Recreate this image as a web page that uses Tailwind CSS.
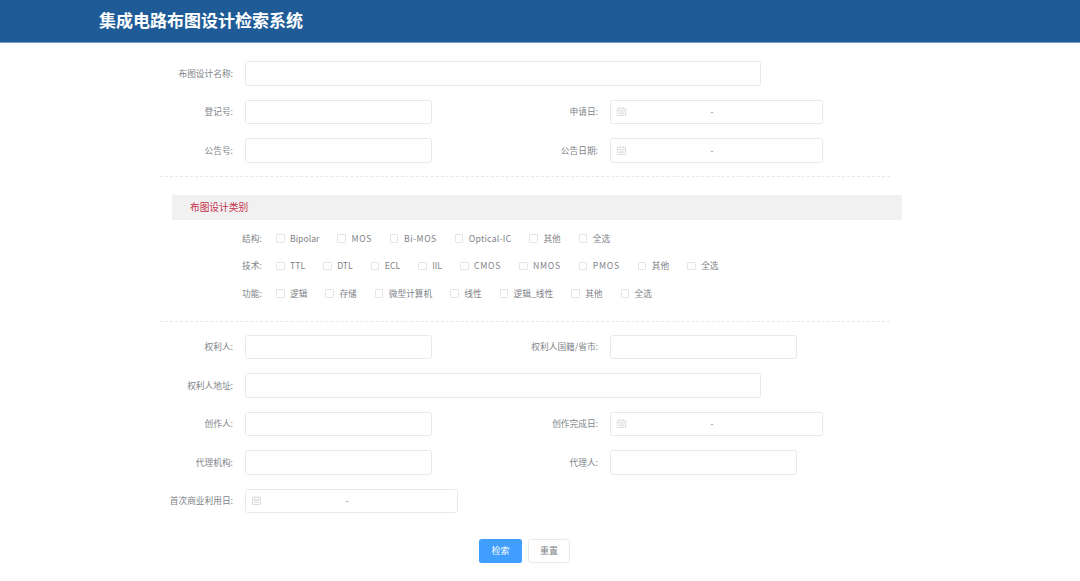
<!DOCTYPE html>
<html lang="zh">
<head>
<meta charset="utf-8">
<title>集成电路布图设计检索系统</title>
<script src="https://cdn.jsdelivr.net/npm/@tailwindcss/browser@4"></script>
</head>
<body class="bg-white overflow-hidden font-['Noto_Sans_CJK_SC','Noto_Sans',sans-serif]">
<div class="w-[1080px] h-[581px] overflow-hidden text-[8.7px] text-[#808388]">
  <header class="h-[43px] bg-[#1f5c97] border-b border-[#6f9cc2] pl-[99px] flex items-center">
    <h1 class="text-[17px] font-bold text-white leading-none pb-[3px]">集成电路布图设计检索系统</h1>
  </header>

  <main class="pl-[160px] pt-[18px]">
    <div class="w-[730px] flex flex-col gap-[14px]">
      <div class="flex items-center gap-[12px] h-[24.5px]">
        <label class="w-[73px] text-right">布图设计名称:</label>
        <div class="w-[516px] h-full border border-[#e8e9ec] rounded-[2.5px]"></div>
      </div>
      <div class="flex items-center gap-[12px] h-[24.5px]">
        <label class="w-[73px] text-right">登记号:</label>
        <div class="w-[187px] h-full border border-[#e8e9ec] rounded-[2.5px]"></div>
        <label class="w-[154px] text-right">申请日:</label>
        <div class="w-[213px] h-full border border-[#e8e9ec] rounded-[2.5px] flex items-center pl-[6px] pr-[24px]">
          <svg class="w-[9px] h-[9px]" viewBox="0 0 9 9" fill="none" stroke="#d3d5d9" stroke-width="0.8"><rect x="0.5" y="1.2" width="8" height="7.3" rx="0.5"/><path d="M0.5 3.4H8.5M2.5 0.4V2M6.5 0.4V2M2 5H7M2 6.6H7"/></svg>
          <span class="flex-1 text-center">-</span>
        </div>
      </div>
      <div class="flex items-center gap-[12px] h-[24.5px]">
        <label class="w-[73px] text-right">公告号:</label>
        <div class="w-[187px] h-full border border-[#e8e9ec] rounded-[2.5px]"></div>
        <label class="w-[154px] text-right">公告日期:</label>
        <div class="w-[213px] h-full border border-[#e8e9ec] rounded-[2.5px] flex items-center pl-[6px] pr-[24px]">
          <svg class="w-[9px] h-[9px]" viewBox="0 0 9 9" fill="none" stroke="#d3d5d9" stroke-width="0.8"><rect x="0.5" y="1.2" width="8" height="7.3" rx="0.5"/><path d="M0.5 3.4H8.5M2.5 0.4V2M6.5 0.4V2M2 5H7M2 6.6H7"/></svg>
          <span class="flex-1 text-center">-</span>
        </div>
      </div>
    </div>

    <div class="w-[730px] border-t border-dashed border-[#e9e9e9] mt-[13.5px]"></div>

    <section class="mt-[17.5px] ml-[12px] w-[730px] h-[25px] bg-[#f1f1f1] pl-[18px] pt-[1px] flex items-center text-[9.7px] text-[#c4304c]">布图设计类别</section>

    <div class="ml-[82px] mt-[11px] flex flex-col gap-[11.5px]">
      <div class="flex items-center h-[16px]">
        <span class="w-[34px] shrink-0">结构:</span>
        <div class="flex items-center gap-[18px]">
          <label class="flex items-center gap-[5.5px]"><span class="w-[8.5px] h-[8.5px] border border-[#e4e5e8] rounded-[1px]"></span>Bipolar</label>
          <label class="flex items-center gap-[5.5px]"><span class="w-[8.5px] h-[8.5px] border border-[#e4e5e8] rounded-[1px]"></span><span class="tracking-[0.6px]">MOS</span></label>
          <label class="flex items-center gap-[5.5px]"><span class="w-[8.5px] h-[8.5px] border border-[#e4e5e8] rounded-[1px]"></span><span class="tracking-[0.5px]">Bi-MOS</span></label>
          <label class="flex items-center gap-[5.5px]"><span class="w-[8.5px] h-[8.5px] border border-[#e4e5e8] rounded-[1px]"></span><span class="tracking-[0.25px]">Optical-IC</span></label>
          <label class="flex items-center gap-[5.5px]"><span class="w-[8.5px] h-[8.5px] border border-[#e4e5e8] rounded-[1px]"></span>其他</label>
          <label class="flex items-center gap-[5.5px]"><span class="w-[8.5px] h-[8.5px] border border-[#e4e5e8] rounded-[1px]"></span>全选</label>
        </div>
      </div>
      <div class="flex items-center h-[16px]">
        <span class="w-[34px] shrink-0">技术:</span>
        <div class="flex items-center gap-[18px]">
          <label class="flex items-center gap-[5.5px]"><span class="w-[8.5px] h-[8.5px] border border-[#e4e5e8] rounded-[1px]"></span>TTL</label>
          <label class="flex items-center gap-[5.5px]"><span class="w-[8.5px] h-[8.5px] border border-[#e4e5e8] rounded-[1px]"></span>DTL</label>
          <label class="flex items-center gap-[5.5px]"><span class="w-[8.5px] h-[8.5px] border border-[#e4e5e8] rounded-[1px]"></span>ECL</label>
          <label class="flex items-center gap-[5.5px]"><span class="w-[8.5px] h-[8.5px] border border-[#e4e5e8] rounded-[1px]"></span>IIL</label>
          <label class="flex items-center gap-[5.5px]"><span class="w-[8.5px] h-[8.5px] border border-[#e4e5e8] rounded-[1px]"></span><span class="tracking-[0.7px]">CMOS</span></label>
          <label class="flex items-center gap-[5.5px]"><span class="w-[8.5px] h-[8.5px] border border-[#e4e5e8] rounded-[1px]"></span><span class="tracking-[0.7px]">NMOS</span></label>
          <label class="flex items-center gap-[5.5px]"><span class="w-[8.5px] h-[8.5px] border border-[#e4e5e8] rounded-[1px]"></span><span class="tracking-[0.7px]">PMOS</span></label>
          <label class="flex items-center gap-[5.5px]"><span class="w-[8.5px] h-[8.5px] border border-[#e4e5e8] rounded-[1px]"></span>其他</label>
          <label class="flex items-center gap-[5.5px]"><span class="w-[8.5px] h-[8.5px] border border-[#e4e5e8] rounded-[1px]"></span>全选</label>
        </div>
      </div>
      <div class="flex items-center h-[16px]">
        <span class="w-[34px] shrink-0">功能:</span>
        <div class="flex items-center gap-[18px]">
          <label class="flex items-center gap-[5.5px]"><span class="w-[8.5px] h-[8.5px] border border-[#e4e5e8] rounded-[1px]"></span>逻辑</label>
          <label class="flex items-center gap-[5.5px]"><span class="w-[8.5px] h-[8.5px] border border-[#e4e5e8] rounded-[1px]"></span>存储</label>
          <label class="flex items-center gap-[5.5px]"><span class="w-[8.5px] h-[8.5px] border border-[#e4e5e8] rounded-[1px]"></span>微型计算机</label>
          <label class="flex items-center gap-[5.5px]"><span class="w-[8.5px] h-[8.5px] border border-[#e4e5e8] rounded-[1px]"></span>线性</label>
          <label class="flex items-center gap-[5.5px]"><span class="w-[8.5px] h-[8.5px] border border-[#e4e5e8] rounded-[1px]"></span>逻辑_线性</label>
          <label class="flex items-center gap-[5.5px]"><span class="w-[8.5px] h-[8.5px] border border-[#e4e5e8] rounded-[1px]"></span>其他</label>
          <label class="flex items-center gap-[5.5px]"><span class="w-[8.5px] h-[8.5px] border border-[#e4e5e8] rounded-[1px]"></span>全选</label>
        </div>
      </div>
    </div>

    <div class="w-[730px] border-t border-dashed border-[#e9e9e9] mt-[19.5px]"></div>

    <div class="w-[730px] mt-[12.5px] flex flex-col gap-[14px]">
      <div class="flex items-center gap-[12px] h-[24.5px]">
        <label class="w-[73px] text-right">权利人:</label>
        <div class="w-[187px] h-full border border-[#e8e9ec] rounded-[2.5px]"></div>
        <label class="w-[154px] text-right">权利人国籍/省市:</label>
        <div class="w-[187px] h-full border border-[#e8e9ec] rounded-[2.5px]"></div>
      </div>
      <div class="flex items-center gap-[12px] h-[24.5px]">
        <label class="w-[73px] text-right">权利人地址:</label>
        <div class="w-[516px] h-full border border-[#e8e9ec] rounded-[2.5px]"></div>
      </div>
      <div class="flex items-center gap-[12px] h-[24.5px]">
        <label class="w-[73px] text-right">创作人:</label>
        <div class="w-[187px] h-full border border-[#e8e9ec] rounded-[2.5px]"></div>
        <label class="w-[154px] text-right">创作完成日:</label>
        <div class="w-[213px] h-full border border-[#e8e9ec] rounded-[2.5px] flex items-center pl-[6px] pr-[24px]">
          <svg class="w-[9px] h-[9px]" viewBox="0 0 9 9" fill="none" stroke="#d3d5d9" stroke-width="0.8"><rect x="0.5" y="1.2" width="8" height="7.3" rx="0.5"/><path d="M0.5 3.4H8.5M2.5 0.4V2M6.5 0.4V2M2 5H7M2 6.6H7"/></svg>
          <span class="flex-1 text-center">-</span>
        </div>
      </div>
      <div class="flex items-center gap-[12px] h-[24.5px]">
        <label class="w-[73px] text-right">代理机构:</label>
        <div class="w-[187px] h-full border border-[#e8e9ec] rounded-[2.5px]"></div>
        <label class="w-[154px] text-right">代理人:</label>
        <div class="w-[187px] h-full border border-[#e8e9ec] rounded-[2.5px]"></div>
      </div>
      <div class="flex items-center gap-[12px] h-[24.5px]">
        <label class="w-[73px] text-right whitespace-nowrap">首次商业利用日:</label>
        <div class="w-[213px] h-full border border-[#e8e9ec] rounded-[2.5px] flex items-center pl-[6px] pr-[24px]">
          <svg class="w-[9px] h-[9px]" viewBox="0 0 9 9" fill="none" stroke="#d3d5d9" stroke-width="0.8"><rect x="0.5" y="1.2" width="8" height="7.3" rx="0.5"/><path d="M0.5 3.4H8.5M2.5 0.4V2M6.5 0.4V2M2 5H7M2 6.6H7"/></svg>
          <span class="flex-1 text-center">-</span>
        </div>
      </div>
    </div>

    <div class="ml-[319px] mt-[25.5px] flex gap-[6px] h-[24.5px] text-[9px]">
      <button class="w-[43px] h-full bg-[#409eff] text-white rounded-[2.5px]">检索</button>
      <button class="w-[42px] h-full bg-white border border-[#e8e9ec] text-[#808388] rounded-[2.5px]">重置</button>
    </div>
  </main>
</div>
</body>
</html>
